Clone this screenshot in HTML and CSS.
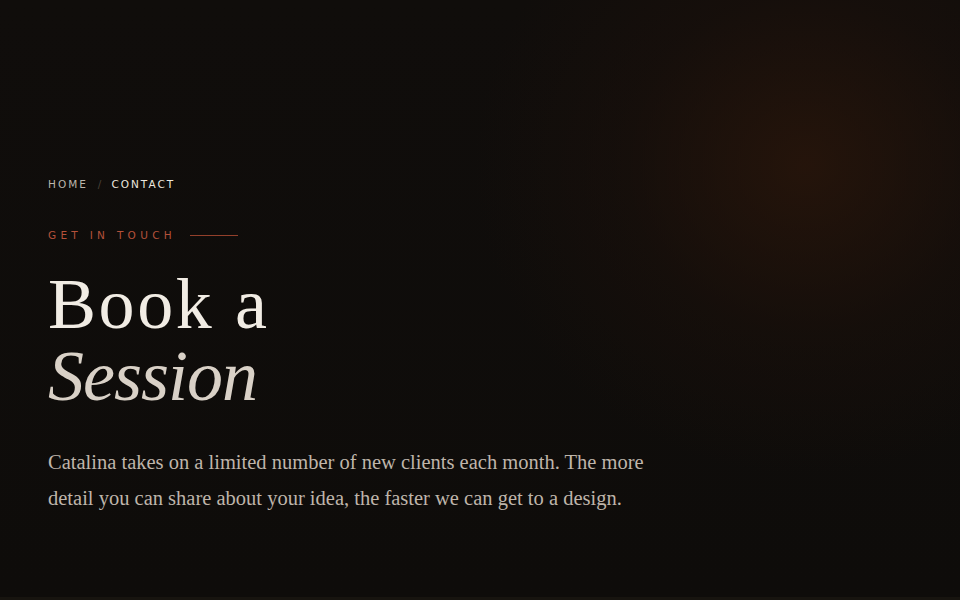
FILE: index.html
```html
<!DOCTYPE html>
<html lang="en">
<head>
<meta charset="utf-8">
<title>Contact — Book a Session</title>
<link rel="stylesheet" href="styles.css">
</head>
<body>
<section class="hero">
  <nav class="crumbs">
    <span class="crumb">Home</span>
    <span class="sep">/</span>
    <span class="crumb current">Contact</span>
  </nav>
  <div class="eyebrow">
    <span class="eyebrow-text">Get in touch</span>
    <span class="eyebrow-line"></span>
  </div>
  <h1 class="title">
    <span class="title-line">Book a</span>
    <em class="title-line italic">Session</em>
  </h1>
  <p class="lead">Catalina takes on a limited number of new clients each month. The more detail you can share about your idea, the faster we can get to a design.</p>
</section>
</body>
</html>
```
FILE: styles.css
```css
html, body {
  margin: 0;
  padding: 0;
  height: 100%;
}
body {
  background: #0f0d0b;
  color: #efe9e1;
  font-family: "Liberation Serif", "DejaVu Serif", serif;
}
.hero {
  box-sizing: border-box;
  height: 600px;
  padding: 177px 48px 0;
  background:
    radial-gradient(ellipse 330px 310px at 805px 165px, rgba(42, 22, 11, 0.8), rgba(30, 17, 11, 0.4) 55%, rgba(15, 13, 11, 0) 100%),
    linear-gradient(180deg, #100d0b 0%, #0e0c0a 100%);
  border-bottom: 3px solid #17140f;
}
.crumbs {
  display: flex;
  align-items: center;
  gap: 10px;
  font-family: "DejaVu Sans", "Noto Sans", sans-serif;
  font-size: 10.5px;
  letter-spacing: 2px;
  text-transform: uppercase;
  line-height: 14px;
}
.crumb { color: #bdb6ad; }
.crumb.current { color: #ece7df; }
.sep { color: #4a4138; letter-spacing: 0; }
.eyebrow {
  display: flex;
  align-items: center;
  gap: 14px;
  margin-top: 37px;
  font-family: "DejaVu Sans", "Noto Sans", sans-serif;
  font-size: 10.5px;
  letter-spacing: 4.3px;
  text-transform: uppercase;
  line-height: 14px;
  color: #b4513a;
}
.eyebrow-line {
  display: block;
  width: 48px;
  height: 1px;
  background: #93402b;
}
.title {
  margin: 26px 0 0;
  font-weight: 400;
  font-size: 72px;
  line-height: 72px;
  letter-spacing: 2.6px;
}
.title-line { display: block; color: #f1ece4; }
.title-line.italic { font-style: italic; color: #d9d1c7; letter-spacing: -1px; }
.lead {
  margin: 32px 0 0;
  max-width: 612px;
  font-size: 20.5px;
  line-height: 36px;
  color: #bfb5aa;
}
```
